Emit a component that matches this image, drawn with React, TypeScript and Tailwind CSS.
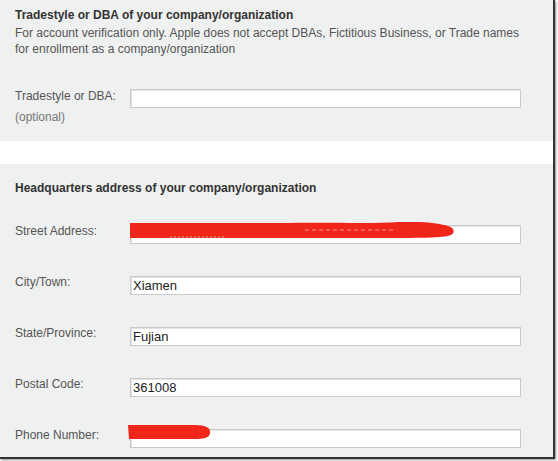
const rows = [
  { label: "Street Address:", value: "", redact: "street" },
  { label: "City/Town:", value: "Xiamen" },
  { label: "State/Province:", value: "Fujian" },
  { label: "Postal Code:", value: "361008" },
  { label: "Phone Number:", value: "", redact: "phone" },
];

function Redaction({ kind }: { kind?: string }) {
  if (kind === "street") {
    return (
      <svg className="pointer-events-none absolute left-0 top-0" width="330" height="20" viewBox="0 0 330 20">
        <path
          d="M0 1 H150 C200 0 240 2 268 0 C290 -1 308 1 318 4 C325 6 325 11 321 13 C314 16 290 16 240 16 H0 Z"
          fill="#f0261b"
        />
        <path d="M40 15 H95" stroke="#f7a29b" strokeWidth="1" strokeDasharray="2 2" />
        <path d="M175 8 H265" stroke="#f6908a" strokeWidth="1" strokeDasharray="4 3" />
      </svg>
    );
  }
  if (kind === "phone") {
    return (
      <svg className="pointer-events-none absolute -left-[3px] -top-[2px]" width="88" height="18" viewBox="0 0 88 18">
        <path d="M1 1 H64 C76 1 82 2 83 7 C84 12 80 15 70 15 H2 Z" fill="#f0261b" />
      </svg>
    );
  }
  return null;
}

function Field({ value, redact }: { value: string; redact?: string }) {
  return (
    <div className="relative h-[19px] w-[391px]">
      <input
        readOnly
        value={value}
        className="h-full w-full border border-[#c9c9c9] bg-white px-[2px] text-[13px] leading-[17px] text-[#222] outline-none shadow-[inset_1px_1px_0_#e4e4e4]"
      />
      <Redaction kind={redact} />
    </div>
  );
}

export default function App() {
  return (
    <div className="h-[461px] w-[558px] bg-white font-['Liberation_Sans',Arial,sans-serif]">
      <div className="flex h-[459px] w-[555px] flex-col overflow-hidden border-b-2 border-r-2 border-[#333] shadow-[1px_1px_2px_rgba(0,0,0,0.45)]">
        <section className="h-[141px] shrink-0 bg-[#eff0f0] px-[15px] pt-[7px]">
          <h2 className="text-[12px] font-bold leading-[16px] text-[#333]">
            Tradestyle or DBA of your company/organization
          </h2>
          <p className="mt-[2px] text-[12px] leading-[16px] text-[#555]">
            For account verification only. Apple does not accept DBAs, Fictitious Business, or Trade names
            <br />
            for enrollment as a company/organization
          </p>
          <div className="mt-[29px] flex">
            <div className="w-[115px] pt-[1px] text-[12px] leading-[19px] text-[#555]">
              Tradestyle or DBA:
              <div className="mt-[2px] leading-[18px] text-[#777]">(optional)</div>
            </div>
            <Field value="" />
          </div>
        </section>

        <div className="h-[23px] shrink-0 bg-white" />

        <section className="flex-1 bg-[#eff0f0] px-[15px] pt-[16px]">
          <h2 className="text-[12px] font-bold leading-[16px] text-[#333]">
            Headquarters address of your company/organization
          </h2>
          <div className="mt-[26px] flex flex-col gap-[32px]">
            {rows.map((r) => (
              <div key={r.label} className="flex items-center">
                <div className="-mt-[2px] w-[115px] text-[12px] leading-[16px] text-[#555]">{r.label}</div>
                <Field value={r.value} redact={r.redact} />
              </div>
            ))}
          </div>
        </section>
      </div>
    </div>
  );
}
